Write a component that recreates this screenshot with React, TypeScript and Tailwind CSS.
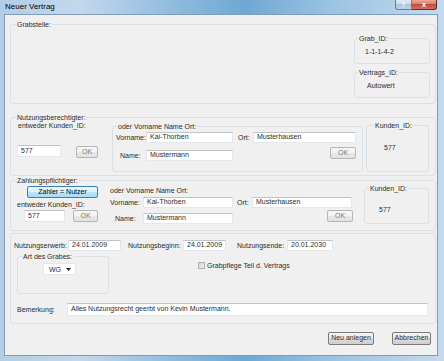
import React from 'react';

const glass =
  'bg-[linear-gradient(90deg,#b3cde6_0%,#c2d8ec_18%,#8dbadd_40%,#6ea8d3_55%,#9cc3e3_75%,#c4daee_100%)]';

function GroupBox({
  label,
  labelPos = 'left-[5px]',
  className = '',
  children,
}: {
  label?: string;
  labelPos?: string;
  className?: string;
  children?: React.ReactNode;
}) {
  return (
    <div className={`relative shrink-0 rounded-[3px] border border-[#dae1e6] ${className}`}>
      {label && (
        <span
          className={`absolute -top-[5px] whitespace-nowrap bg-[#f0f0f0] px-[1px] leading-[9px] ${labelPos}`}
        >
          {label}
        </span>
      )}
      {children}
    </div>
  );
}

function TextBox({ value, className = '' }: { value?: string; className?: string }) {
  return (
    <div
      className={`flex shrink-0 items-center overflow-hidden whitespace-nowrap border border-[#e4e7eb] border-t-[#c0c3c9] bg-white pl-[3px] ${className}`}
    >
      {value}
    </div>
  );
}

function Btn({
  children,
  className = '',
  disabled,
}: {
  children: React.ReactNode;
  className?: string;
  disabled?: boolean;
}) {
  return (
    <div
      className={`flex shrink-0 items-center justify-center whitespace-nowrap rounded-[2px] border ${
        disabled
          ? 'border-[#b3b7ba] bg-[linear-gradient(180deg,#f7f7f7_0%,#f2f2f2_50%,#e8e8e8_50%,#e2e2e2_100%)] text-[#7a7a7a]'
          : 'border-[#7a7a7a] bg-[linear-gradient(180deg,#f2f2f2_0%,#ebebeb_50%,#dddddd_50%,#cfcfcf_100%)]'
      } ${className}`}
    >
      {children}
    </div>
  );
}

function Text({ children, className = '' }: { children: React.ReactNode; className?: string }) {
  return <span className={`shrink-0 whitespace-nowrap leading-[9px] ${className}`}>{children}</span>;
}

function TitleBar() {
  return (
    <div className="flex h-[14px] shrink-0 items-start">
      <span className="ml-[5px] mt-[2px] text-[8px] leading-[9px] text-black">Neuer Vertrag</span>
      <div className="flex-1" />
      <div className="mr-[7px] flex">
        <div className="flex h-[10px] w-[17px] items-end justify-center rounded-bl-[3px] border border-t-0 border-[#5f7fa5] bg-[linear-gradient(180deg,#dfeaf5_0%,#c6d9ec_50%,#a9c4df_50%,#bcd4ea_100%)] text-[8px] font-bold leading-[9px] text-[#f4f7fb]">
          ?
        </div>
        <div className="flex h-[10px] w-[25px] items-end justify-center rounded-br-[3px] border border-l-0 border-t-0 border-[#6b2525] bg-[linear-gradient(180deg,#e9a897_0%,#d77b6a_50%,#c24a3a_50%,#d2705c_100%)] text-[8px] font-bold leading-[9px] text-white">
          x
        </div>
      </div>
    </div>
  );
}

function Grabstelle() {
  return (
    <GroupBox label="Grabstelle:" className="ml-[5px] mt-[9px] h-[80px] w-[426px]">
      <div className="flex flex-col items-end gap-[8px] pr-[5px] pt-[13px]">
        <GroupBox label="Grab_ID:" labelPos="left-[3px]" className="h-[26px] w-[76px]">
          <Text className="ml-[10px] mt-[8px] block">1-1-1-4-2</Text>
        </GroupBox>
        <GroupBox label="Vertrags_ID:" labelPos="left-[3px]" className="h-[26px] w-[76px]">
          <Text className="ml-[12px] mt-[8px] block">Autowert</Text>
        </GroupBox>
      </div>
    </GroupBox>
  );
}

function Nutzungsberechtigter() {
  return (
    <GroupBox
      label="Nutzungsberechtigter:"
      labelPos="left-[5px]"
      className="ml-[5px] mt-[13px] h-[59px] w-[426px]"
    >
      <div className="flex items-start">
        <div className="ml-[6px] flex w-[91px] shrink-0 flex-col">
          <Text className="ml-[1px] mt-[3px]">entweder Kunden_ID:</Text>
          <div className="mt-[15px] flex items-start">
            <TextBox value="577" className="h-[12px] w-[44px]" />
            <Btn disabled className="ml-[15px] mt-[1px] h-[12px] w-[22px]">
              OK
            </Btn>
          </div>
        </div>
        <GroupBox
          label="oder Vorname Name Ort:"
          labelPos="left-[4px]"
          className="ml-[4px] mt-[8px] h-[46px] w-[251px]"
        >
          <div className="mt-[5px] flex h-[11px] items-center">
            <Text className="ml-[3px] w-[30px]">Vorname:</Text>
            <TextBox value="Kai-Thorben" className="h-[11px] w-[87px]" />
            <Text className="ml-[5px] w-[15px]">Ort:</Text>
            <TextBox value="Musterhausen" className="h-[11px] w-[103px]" />
          </div>
          <div className="mt-[4px] flex items-start">
            <div className="mt-[3px] flex items-center">
              <Text className="ml-[7px] w-[26px]">Name:</Text>
              <TextBox value="Mustermann" className="h-[11px] w-[87px]" />
            </div>
            <Btn disabled className="ml-[97px] h-[12px] w-[26px]">
              OK
            </Btn>
          </div>
        </GroupBox>
        <GroupBox
          label="Kunden_ID:"
          labelPos="left-[7px]"
          className="ml-[3px] mt-[7px] h-[47px] w-[63px]"
        >
          <Text className="ml-[17px] mt-[17px] block">577</Text>
        </GroupBox>
      </div>
    </GroupBox>
  );
}

function Zahlungspflichtiger() {
  return (
    <GroupBox
      label="Zahlungspflichtiger:"
      labelPos="left-[5px]"
      className="ml-[5px] mt-[4px] h-[51px] w-[426px]"
    >
      <div className="flex items-start">
        <div className="flex w-[94px] shrink-0 flex-col">
          <div className="ml-[16px] mt-[5px] flex h-[12px] w-[71px] items-center justify-center whitespace-nowrap rounded-[2px] border border-[#3c7fb1] bg-[linear-gradient(180deg,#eaf6fd_0%,#d9f0fc_50%,#bee6fd_50%,#a7d9f5_100%)] text-black">
            Zahler = Nutzer
          </div>
          <Text className="ml-[6px] mt-[2px]">entweder Kunden_ID:</Text>
          <div className="mt-[1px] flex items-start">
            <TextBox value="577" className="ml-[13px] h-[12px] w-[41px]" />
            <Btn disabled className="ml-[8px] h-[12px] w-[25px]">
              OK
            </Btn>
          </div>
        </div>
        <div className="ml-[3px] flex w-[254px] shrink-0 flex-col">
          <Text className="ml-[2px] mt-[5px]">oder Vorname Name Ort:</Text>
          <div className="mt-[2px] flex h-[11px] items-center">
            <Text className="ml-[2px] w-[33px]">Vorname:</Text>
            <TextBox value="Kai-Thorben" className="h-[11px] w-[90px]" />
            <Text className="ml-[4px] w-[15px]">Ort:</Text>
            <TextBox value="Musterhausen" className="h-[11px] w-[100px]" />
          </div>
          <div className="mt-[2px] flex items-start">
            <div className="mt-[3px] flex items-center">
              <Text className="ml-[7px] w-[28px]">Name:</Text>
              <TextBox value="Mustermann" className="h-[11px] w-[90px]" />
            </div>
            <Btn disabled className="ml-[94px] h-[12px] w-[26px]">
              OK
            </Btn>
          </div>
        </div>
        <GroupBox
          label="Kunden_ID:"
          labelPos="left-[4px]"
          className="ml-[2px] mt-[7px] h-[36px] w-[65px]"
        >
          <Text className="ml-[14px] mt-[16px] block">577</Text>
        </GroupBox>
      </div>
    </GroupBox>
  );
}

function Vertragsdaten() {
  return (
    <GroupBox className="ml-[5px] mt-[2px] h-[91px] w-[426px]">
      <div className="mt-[5px] flex h-[12px] items-center">
        <Text className="ml-[3px] w-[54px]">Nutzungserwerb:</Text>
        <TextBox value="24.01.2009" className="h-[11px] w-[53px]" />
        <Text className="ml-[7px] w-[55px]">Nutzungsbeginn:</Text>
        <TextBox value="24.01.2009" className="h-[11px] w-[43px]" />
        <Text className="ml-[11px] w-[50px]">Nutzungsende:</Text>
        <TextBox value="20.01.2030" className="h-[11px] w-[46px]" />
      </div>
      <div className="flex items-start">
        <GroupBox
          label="Art des Grabes:"
          labelPos="left-[4px]"
          className="ml-[6px] mt-[5px] h-[38px] w-[92px]"
        >
          <div className="ml-[25px] mt-[6px] flex h-[12px] w-[33px] items-center justify-between border border-[#e6e6e6] bg-white pl-[5px] pr-[4px]">
            <span className="leading-[9px]">WG</span>
            <svg width="5" height="3" viewBox="0 0 5 3">
              <path d="M0 0h5L2.5 3z" fill="#202020" />
            </svg>
          </div>
        </GroupBox>
        <div className="ml-[89px] mt-[10px] flex items-center gap-[2px]">
          <div className="h-[7px] w-[7px] border border-[#b0b0b0] bg-[linear-gradient(135deg,#d6d6d6_0%,#eeeeee_100%)]" />
          <Text>Grabpflege Teil d. Vertrags</Text>
        </div>
      </div>
      <div className="mt-[9px] flex h-[13px] items-center">
        <Text className="ml-[6px] w-[50px]">Bemerkung:</Text>
        <TextBox
          value="Alles Nutzungsrecht geerbt von Kevin Mustermann."
          className="h-[13px] w-[361px]"
        />
      </div>
    </GroupBox>
  );
}

export default function App() {
  return (
    <div
      className={`flex h-[361px] w-[444px] flex-col overflow-hidden font-['Liberation_Sans',Arial,sans-serif] text-[7px] text-[#2c2c2c] ${glass}`}
    >
      <TitleBar />
      <div className="flex-1 pb-[5px] pl-[4px] pr-[6px]">
        <div className="flex h-full flex-col border border-[#7f9cba] bg-[#f0f0f0]">
          <Grabstelle />
          <Nutzungsberechtigter />
          <Zahlungspflichtiger />
          <Vertragsdaten />
          <div className="mt-[8px] flex justify-end gap-[18px] pr-[6px]">
            <Btn className="h-[13px] w-[46px]">Neu anlegen</Btn>
            <Btn className="h-[13px] w-[39px]">Abbrechen</Btn>
          </div>
        </div>
      </div>
    </div>
  );
}
